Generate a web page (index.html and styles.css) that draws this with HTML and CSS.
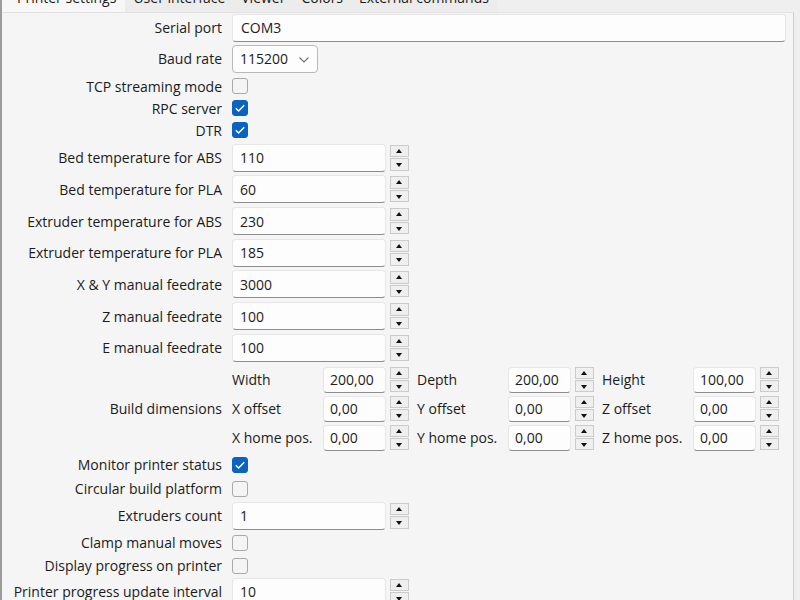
FILE: index.html
```html
<!DOCTYPE html>
<html>
<head>
<meta charset="utf-8">
<link rel="stylesheet" href="styles.css">
</head>
<body>
<div class="window">
  <div class="tabs">
    <div class="tab active">Printer settings</div>
    <div class="tab">User interface</div>
    <div class="tab">Viewer</div>
    <div class="tab">Colors</div>
    <div class="tab">External commands</div>
  </div>
  <div class="panel">
    <div class="row r-serial">
      <span class="lbl">Serial port</span>
      <div class="field wide">COM3</div>
    </div>
    <div class="row r-baud">
      <span class="lbl">Baud rate</span>
      <div class="combo">115200<svg class="chev" width="10" height="6" viewBox="0 0 10 6"><polyline points="0.5,0.5 5,5 9.5,0.5" fill="none" stroke="#707070" stroke-width="1.1"/></svg></div>
    </div>
    <div class="row r-check">
      <span class="lbl">TCP streaming mode</span>
      <span class="cb"></span>
    </div>
    <div class="row r-check">
      <span class="lbl">RPC server</span>
      <span class="cb on"><svg width="16" height="16" viewBox="0 0 16 16"><polyline points="3.8,8.3 6.6,11 12.2,5.2" fill="none" stroke="#fff" stroke-width="1.4"/></svg></span>
    </div>
    <div class="row r-check">
      <span class="lbl">DTR</span>
      <span class="cb on"><svg width="16" height="16" viewBox="0 0 16 16"><polyline points="3.8,8.3 6.6,11 12.2,5.2" fill="none" stroke="#fff" stroke-width="1.4"/></svg></span>
    </div>

    <div class="spins">
      <div class="row r-spin">
        <span class="lbl">Bed temperature for ABS</span>
        <div class="spinfield"><div class="field num">110</div><div class="spin"><span class="up"></span><span class="dn"></span></div></div>
      </div>
      <div class="row r-spin">
        <span class="lbl">Bed temperature for PLA</span>
        <div class="spinfield"><div class="field num">60</div><div class="spin"><span class="up"></span><span class="dn"></span></div></div>
      </div>
      <div class="row r-spin">
        <span class="lbl">Extruder temperature for ABS</span>
        <div class="spinfield"><div class="field num">230</div><div class="spin"><span class="up"></span><span class="dn"></span></div></div>
      </div>
      <div class="row r-spin">
        <span class="lbl">Extruder temperature for PLA</span>
        <div class="spinfield"><div class="field num">185</div><div class="spin"><span class="up"></span><span class="dn"></span></div></div>
      </div>
      <div class="row r-spin">
        <span class="lbl">X &amp; Y manual feedrate</span>
        <div class="spinfield"><div class="field num">3000</div><div class="spin"><span class="up"></span><span class="dn"></span></div></div>
      </div>
      <div class="row r-spin">
        <span class="lbl">Z manual feedrate</span>
        <div class="spinfield"><div class="field num">100</div><div class="spin"><span class="up"></span><span class="dn"></span></div></div>
      </div>
      <div class="row r-spin">
        <span class="lbl">E manual feedrate</span>
        <div class="spinfield"><div class="field num">100</div><div class="spin"><span class="up"></span><span class="dn"></span></div></div>
      </div>
    </div>

    <div class="row build">
      <span class="lbl">Build dimensions</span>
      <div class="dims">
        <span class="sub">Width</span><div class="field small">200,00</div><div class="spin sm"><span class="up"></span><span class="dn"></span></div>
        <span class="sub">Depth</span><div class="field small">200,00</div><div class="spin sm"><span class="up"></span><span class="dn"></span></div>
        <span class="sub">Height</span><div class="field small">100,00</div><div class="spin sm"><span class="up"></span><span class="dn"></span></div>
        <span class="sub">X offset</span><div class="field small">0,00</div><div class="spin sm"><span class="up"></span><span class="dn"></span></div>
        <span class="sub">Y offset</span><div class="field small">0,00</div><div class="spin sm"><span class="up"></span><span class="dn"></span></div>
        <span class="sub">Z offset</span><div class="field small">0,00</div><div class="spin sm"><span class="up"></span><span class="dn"></span></div>
        <span class="sub">X home pos.</span><div class="field small">0,00</div><div class="spin sm"><span class="up"></span><span class="dn"></span></div>
        <span class="sub">Y home pos.</span><div class="field small">0,00</div><div class="spin sm"><span class="up"></span><span class="dn"></span></div>
        <span class="sub">Z home pos.</span><div class="field small">0,00</div><div class="spin sm"><span class="up"></span><span class="dn"></span></div>
      </div>
    </div>

    <div class="row r-check2">
      <span class="lbl">Monitor printer status</span>
      <span class="cb on"><svg width="16" height="16" viewBox="0 0 16 16"><polyline points="3.8,8.3 6.6,11 12.2,5.2" fill="none" stroke="#fff" stroke-width="1.4"/></svg></span>
    </div>
    <div class="row r-check2">
      <span class="lbl">Circular build platform</span>
      <span class="cb"></span>
    </div>
    <div class="row r-spin2">
      <span class="lbl">Extruders count</span>
      <div class="spinfield"><div class="field num">1</div><div class="spin"><span class="up"></span><span class="dn"></span></div></div>
    </div>
    <div class="row r-check2 mt1">
      <span class="lbl">Clamp manual moves</span>
      <span class="cb"></span>
    </div>
    <div class="row r-check">
      <span class="lbl">Display progress on printer</span>
      <span class="cb"></span>
    </div>
    <div class="row r-spin2">
      <span class="lbl">Printer progress update interval</span>
      <div class="spinfield"><div class="field num">10</div><div class="spin"><span class="up"></span><span class="dn"></span></div></div>
    </div>
  </div>
</div>
</body>
</html>
```

FILE: styles.css
```css
html, body {
  margin: 0;
  padding: 0;
  background: #efefef;
  overflow: hidden;
}
body {
  font-family: "Open Sans", "Noto Sans", sans-serif;
  font-size: 14px;
  color: #1b1b1b;
}
.window {
  width: 800px;
  height: 600px;
  border-left: 2px solid #9c9c9c;
  box-sizing: border-box;
  overflow: hidden;
}
.tabs {
  display: flex;
  margin-top: -12px;
  height: 24px;
  line-height: 20px;
}
.tab {
  padding: 0 8px;
  background: #ececec;
  white-space: nowrap;
}
.tab.active {
  background: #f7f7f7;
  padding: 0 9px 0 15px;
}
.panel {
  width: 792px;
  height: 600px;
  box-sizing: border-box;
  background: #f5f5f5;
  border-top: 1px solid #e2e2e2;
  border-right: 1px solid #cfcfcf;
}
.row {
  display: grid;
  grid-template-columns: 220px auto;
  column-gap: 10px;
  align-items: center;
  justify-items: start;
}
.lbl {
  justify-self: end;
  white-space: nowrap;
}
.r-serial { height: 29px; }
.r-baud { height: 33px; }
.r-check { height: 22px; }
.r-check2 { height: 24px; }
.mt1 { margin-top: 1px; }
.spins { margin-top: 1px; }
.r-spin { height: 31.67px; }
.r-spin2 { height: 28px; margin-top: 1px; }
.build { height: 87px; margin-top: 1.8px; margin-bottom: 0.5px; }

.field {
  box-sizing: border-box;
  background: #fdfdfd;
  border: 1px solid #e6e6e6;
  border-bottom: 1px solid #8d8d8d;
  border-radius: 4px;
  padding: 0 7px;
  display: flex;
  align-items: center;
  white-space: nowrap;
}
.field.wide { width: 554px; height: 28px; padding-left: 8px; }
.field.num { width: 154px; height: 28px; }
.field.small { width: 63px; height: 26px; padding-left: 6px; }

.combo {
  box-sizing: border-box;
  width: 86px;
  height: 28px;
  border: 1px solid #b9b9b9;
  border-radius: 4px;
  background: #fdfdfd;
  display: flex;
  align-items: center;
  padding-left: 7px;
  position: relative;
}
.combo .chev {
  position: absolute;
  right: 8px;
  top: 11px;
}

.cb {
  box-sizing: border-box;
  width: 16px;
  height: 16px;
  border: 1px solid #a9a9a9;
  border-radius: 3px;
  background: #f4f4f4;
  display: block;
}
.cb.on {
  background: #0a63c0;
  border-color: #0a63c0;
}
.cb svg {
  display: block;
  margin: -1px;
}

.spinfield {
  display: flex;
  align-items: center;
  gap: 4px;
}
.spin {
  display: flex;
  flex-direction: column;
  gap: 1px;
  width: 19px;
}
.spin span {
  box-sizing: border-box;
  height: 12.5px;
  border: 1px solid #cbcbcb;
  background: #efefef;
  position: relative;
  display: block;
}
.spin.sm span { height: 12px; }
.spin span::after {
  content: "";
  position: absolute;
  left: 5px;
  width: 0;
  height: 0;
  border-left: 3.5px solid transparent;
  border-right: 3.5px solid transparent;
}
.spin .up::after {
  top: 3px;
  border-bottom: 4px solid #111;
}
.spin .dn::after {
  top: 4px;
  border-top: 4px solid #111;
}

.dims {
  display: grid;
  grid-template-columns: 91px 63px 23px 99px 63px 23px 99px 63px 23px;
  grid-auto-rows: 29px;
  align-items: center;
}
.dims .spin { margin-left: 4px; }
.dims .sub { white-space: nowrap; }
.dims .sub:nth-child(9n+4), .dims .sub:nth-child(9n+7) { padding-left: 8px; }
```
